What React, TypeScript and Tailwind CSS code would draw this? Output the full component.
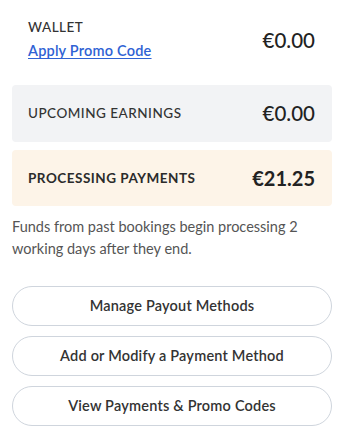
import type { JSX } from 'react'

function BalanceBox({ label, amount, tone }: { label: string; amount: string; tone: 'gray' | 'cream' }): JSX.Element {
  const bold = tone === 'cream'
  return (
    <div
      className={
        tone === 'gray'
          ? 'flex h-[57px] items-center justify-between rounded-[4px] bg-[#f2f3f5] pl-4 pr-[17px]'
          : 'flex h-14 items-center justify-between rounded-[4px] bg-[#fdf4e8] pl-4 pr-[17px]'
      }
    >
      <span className={bold ? 'text-[13.5px] font-bold tracking-[0.5px] text-[#2b2b2b]' : 'text-[13.5px] font-medium tracking-[0.5px] text-[#333]'}>
        {label}
      </span>
      <span className={bold ? 'text-[20px] font-bold text-[#222]' : 'text-[20.5px] font-medium text-[#222]'}>{amount}</span>
    </div>
  )
}

export default function App(): JSX.Element {
  const actions = ['Manage Payout Methods', 'Add or Modify a Payment Method', 'View Payments & Promo Codes']

  return (
    <div className="min-h-screen bg-white pl-3 pr-[14px] pt-[17px] font-['Lato','Noto_Sans',sans-serif] text-[#333]">
      {/* Wallet */}
      <div className="flex items-center justify-between pl-4 pr-[17px]">
        <div className="flex flex-col">
          <span className="text-[13.5px] font-medium leading-5 tracking-[0.5px] text-[#333]">WALLET</span>
          <a href="#" className="mt-1 text-[14.5px] font-semibold leading-5 tracking-[0.2px] text-[#2f62d4] underline underline-offset-2">
            Apply Promo Code
          </a>
        </div>
        <span className="mt-[3px] text-[20.5px] font-medium text-[#222]">€0.00</span>
      </div>

      <div className="mt-6">
        <BalanceBox label="UPCOMING EARNINGS" amount="€0.00" tone="gray" />
      </div>
      <div className="mt-2">
        <BalanceBox label="PROCESSING PAYMENTS" amount="€21.25" tone="cream" />
      </div>

      <p className="mt-[10px] text-[14.5px] leading-[22px] text-[#555]">
        Funds from past bookings begin processing 2 working days after they end.
      </p>

      <div className="mt-[26px] flex flex-col gap-[10px]">
        {actions.map((label) => (
          <button
            key={label}
            type="button"
            className="flex h-10 w-full items-center justify-center rounded-full border border-[#cfd5dd] bg-white text-[14.5px] font-semibold tracking-[0.2px] text-[#333]"
          >
            {label}
          </button>
        ))}
      </div>
    </div>
  )
}
